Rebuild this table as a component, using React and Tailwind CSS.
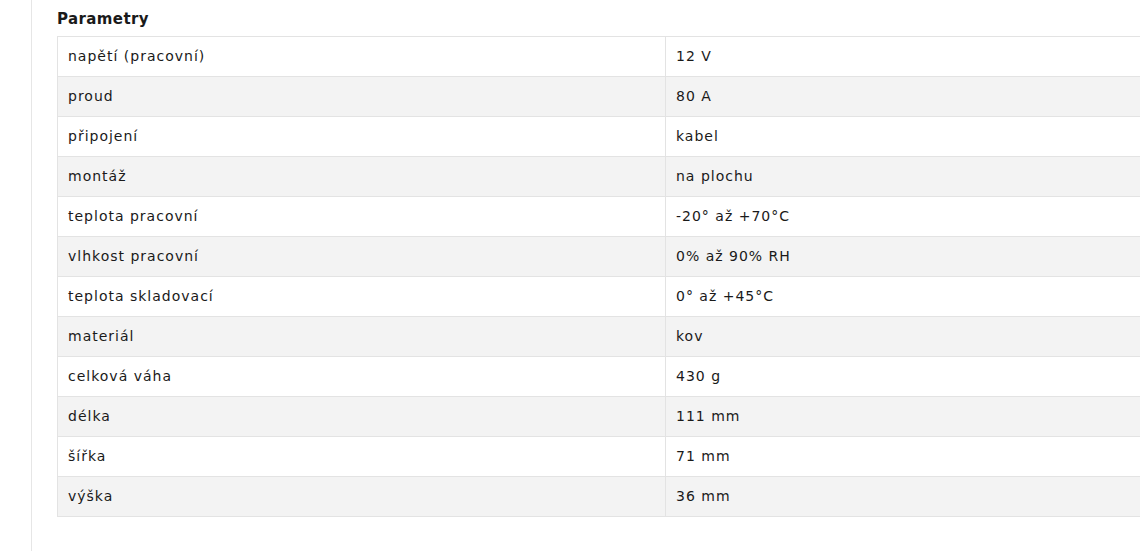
import React from "react";

const params = [
  ["napětí (pracovní)", "12 V"],
  ["proud", "80 A"],
  ["připojení", "kabel"],
  ["montáž", "na plochu"],
  ["teplota pracovní", "-20° až +70°C"],
  ["vlhkost pracovní", "0% až 90% RH"],
  ["teplota skladovací", "0° až +45°C"],
  ["materiál", "kov"],
  ["celková váha", "430 g"],
  ["délka", "111 mm"],
  ["šířka", "71 mm"],
  ["výška", "36 mm"],
];

export default function App() {
  return (
    <div
      className="w-[1140px] h-[551px] bg-white overflow-hidden flex text-[#1a1a1a]"
      style={{ fontFamily: '"DejaVu Sans", "Open Sans", sans-serif' }}
    >
      <div className="w-[31px] shrink-0" />
      <div className="flex-1 border-l border-[#e6e6e6] pl-[25px] pt-[10px]">
        <h2 className="text-[15px] font-bold leading-[18px] tracking-[0.4px] mb-[8px]">Parametry</h2>
        <table className="w-[1216px] border-collapse table-fixed text-[14px] tracking-[1px]">
          <tbody>
            {params.map(([k, v], i) => (
              <tr key={k} className={i % 2 ? "bg-[#f3f3f3]" : "bg-white"}>
                <td className="w-[608px] h-[40px] border border-[#e3e3e3] px-[10px] py-0 align-middle">{k}</td>
                <td className="w-[608px] h-[40px] border border-[#e3e3e3] px-[10px] py-0 align-middle">{v}</td>
              </tr>
            ))}
          </tbody>
        </table>
      </div>
    </div>
  );
}
